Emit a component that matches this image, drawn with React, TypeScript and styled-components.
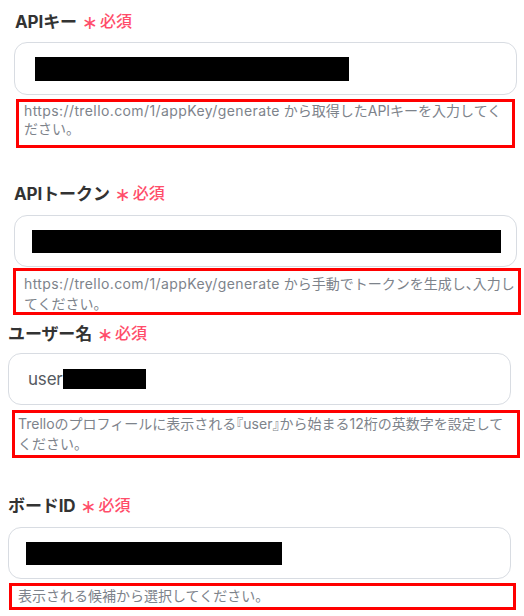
import React from 'react';
import styled, { createGlobalStyle } from 'styled-components';

const GlobalStyle = createGlobalStyle`
    html, body {
        margin: 0;
        padding: 0;
        background: #ffffff;
    }
    body {
        font-family: Inter, "Noto Sans CJK JP", sans-serif;
        color: #333333;
    }
`;

const Page = styled.div`
    width: 524px;
    height: 616px;
    overflow: hidden;
    display: flex;
    flex-direction: column;
`;

const Section = styled.section<{ $left: number; $top: number }>`
    display: flex;
    flex-direction: column;
    margin-top: ${props => props.$top}px;
    padding-left: ${props => props.$left}px;
`;

const LabelRow = styled.div<{ $gap: number; $indent: number }>`
    display: flex;
    align-items: center;
    height: 24px;
    margin-bottom: ${props => props.$gap}px;
    padding-left: ${props => props.$indent}px;
`;

const LabelText = styled.span`
    font-family: Inter, "Noto Sans CJK JP", sans-serif;
    font-size: 17px;
    font-weight: 700;
    color: #333333;
    letter-spacing: -0.1px;
`;

const Asterisk = styled.span`
    margin-left: 5px;
    font-family: "DejaVu Sans", sans-serif;
    font-size: 19px;
    font-weight: 400;
    color: #ff4d6a;
    line-height: 1;
    position: relative;
    top: 2px;
`;

const Required = styled.span`
    margin-left: 2px;
    font-family: "Noto Sans CJK JP", sans-serif;
    font-size: 16px;
    font-weight: 500;
    color: #ff4d6a;
`;

const InputBox = styled.div<{ $height: number; $pad: number }>`
    box-sizing: border-box;
    width: 503px;
    height: ${props => props.$height}px;
    border: 1px solid #d8dce2;
    border-radius: 13px;
    display: flex;
    align-items: center;
    padding-left: ${props => props.$pad}px;
    background: #ffffff;
`;

const ValueText = styled.span`
    font-family: Inter, "Noto Sans CJK JP", sans-serif;
    font-size: 17px;
    color: #555a61;
    letter-spacing: -0.2px;
`;

const Redaction = styled.span<{ $width: number; $height: number }>`
    display: inline-block;
    width: ${props => props.$width}px;
    height: ${props => props.$height}px;
    background: #000000;
`;

const HelpBox = styled.div<{
    $offset: number;
    $width: number;
    $height: number;
    $gap: number;
    $pad: number;
    $padTop: number;
    $line: number;
}>`
    box-sizing: border-box;
    margin-top: ${props => props.$gap}px;
    margin-left: ${props => props.$offset}px;
    width: ${props => props.$width}px;
    height: ${props => props.$height}px;
    border: 3px solid #ff0000;
    padding: ${props => props.$padTop}px 2px 0 ${props => props.$pad}px;
    font-family: Inter, "Noto Sans CJK JP", sans-serif;
    font-size: 14px;
    line-height: ${props => props.$line}px;
    color: #7d838b;
`;

const Url = styled.span`
    letter-spacing: 0.4px;
`;

// brackets and commas are set half width, as in the original
const Punct = styled.span`
    font-family: "Noto Sans CJK JP", sans-serif;
    font-feature-settings: "halt";
`;

type FieldProps = {
    label: string;
    left: number;
    top: number;
    indent: number;
    labelGap: number;
    inputHeight: number;
    inputPad: number;
    value?: string;
    barWidth: number;
    barHeight: number;
    helpGap: number;
    helpOffset: number;
    helpWidth: number;
    helpHeight: number;
    helpPad: number;
    helpPadTop: number;
    helpLine: number;
    children: React.ReactNode;
};

const Field = (props: FieldProps) => (
    <Section $left={props.left} $top={props.top}>
        <LabelRow $gap={props.labelGap} $indent={props.indent}>
            <LabelText>{props.label}</LabelText>
            <Asterisk>∗</Asterisk>
            <Required>必須</Required>
        </LabelRow>
        <InputBox $height={props.inputHeight} $pad={props.inputPad}>
            {props.value && <ValueText>{props.value}</ValueText>}
            <Redaction $width={props.barWidth} $height={props.barHeight} />
        </InputBox>
        <HelpBox
            $gap={props.helpGap}
            $offset={props.helpOffset}
            $width={props.helpWidth}
            $height={props.helpHeight}
            $pad={props.helpPad}
            $padTop={props.helpPadTop}
            $line={props.helpLine}
        >
            {props.children}
        </HelpBox>
    </Section>
);

const App = () => (
    <>
        <GlobalStyle />
        <Page>
            <Field
                label="APIキー"
                left={14}
                top={8}
                indent={1}
                labelGap={10}
                inputHeight={53}
                inputPad={20}
                barWidth={314}
                barHeight={24}
                helpGap={4}
                helpOffset={2}
                helpWidth={499}
                helpHeight={49}
                helpPad={5}
                helpPadTop={0}
                helpLine={18}
            >
                <Url>https://trello.com/1/appKey/generate</Url> から取得したAPIキーを入力してください。
            </Field>
            <Field
                label="APIトークン"
                left={14}
                top={32}
                indent={0}
                labelGap={11}
                inputHeight={52}
                inputPad={17}
                barWidth={469}
                barHeight={23}
                helpGap={1}
                helpOffset={-1}
                helpWidth={508}
                helpHeight={47}
                helpPad={8}
                helpPadTop={2}
                helpLine={20}
            >
                <Url>https://trello.com/1/appKey/generate</Url> から手動でトークンを生成し
                <Punct>、</Punct>入力してください。
            </Field>
            <Field
                label="ユーザー名"
                left={8}
                top={5}
                indent={0}
                labelGap={9}
                inputHeight={52}
                inputPad={19}
                value="user"
                barWidth={83}
                barHeight={20}
                helpGap={5}
                helpOffset={4}
                helpWidth={508}
                helpHeight={48}
                helpPad={3}
                helpPadTop={0}
                helpLine={20}
            >
                Trelloのプロフィールに表示される<Punct>『</Punct>user<Punct>』</Punct>
                から始まる12桁の英数字を設定してください。
            </Field>
            <Field
                label="ボードID"
                left={8}
                top={34}
                indent={0}
                labelGap={11}
                inputHeight={52}
                inputPad={17}
                barWidth={256}
                barHeight={23}
                helpGap={4}
                helpOffset={1}
                helpWidth={507}
                helpHeight={27}
                helpPad={6}
                helpPadTop={0}
                helpLine={20}
            >
                表示される候補から選択してください。
            </Field>
        </Page>
    </>
);

export default App;
